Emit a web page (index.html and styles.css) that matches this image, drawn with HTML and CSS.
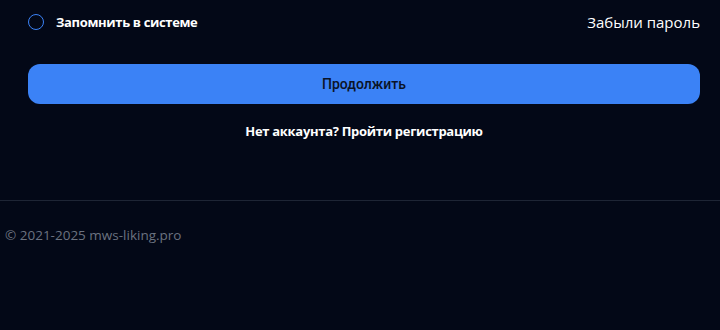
FILE: index.html
```html
<!DOCTYPE html>
<html lang="ru">
<head>
<meta charset="utf-8">
<link rel="stylesheet" href="styles.css">
</head>
<body>
<div class="form">
  <div class="row">
    <label class="remember"><span class="radio"></span><span>Запомнить в системе</span></label>
    <a class="forgot">Забыли пароль</a>
  </div>
  <button class="submit">Продолжить</button>
  <p class="register">Нет аккаунта? Пройти регистрацию</p>
</div>
<footer class="footer">© 2021-2025 mws-liking.pro</footer>
</body>
</html>
```
FILE: styles.css
```css
html, body { margin: 0; padding: 0; }
body {
  background: #030817;
  color: #fff;
  font-family: "Open Sans", "Noto Sans", sans-serif;
  width: 720px;
  height: 330px;
  overflow: hidden;
}
.form { padding: 0 20px 0 28px; }
.row {
  display: flex;
  justify-content: space-between;
  align-items: center;
  height: 44px;
}
.remember {
  display: flex;
  align-items: center;
  gap: 12px;
  font-size: 13px;
  font-weight: 700;
  letter-spacing: -0.35px;
}
.radio {
  width: 14px;
  height: 14px;
  border: 1.5px solid #3b82f6;
  border-radius: 50%;
  box-sizing: content-box;
}
.forgot { font-size: 15px; color: #fff; }
.submit {
  display: block;
  width: 672px;
  height: 40px;
  margin-top: 20px;
  border: 0;
  border-radius: 12px;
  background: #3b82f6;
  color: #0b1326;
  font-family: Roboto, sans-serif;
  font-size: 14px;
  font-weight: 500;
}
.register {
  margin: 18px 0 0;
  text-align: center;
  font-size: 13px;
  font-weight: 700;
  letter-spacing: -0.3px;
}
.footer {
  margin-top: 60px;
  border-top: 1px solid #1e2535;
  padding: 25px 5px 0;
  font-size: 13.5px;
  color: #6b7280;
}
```
